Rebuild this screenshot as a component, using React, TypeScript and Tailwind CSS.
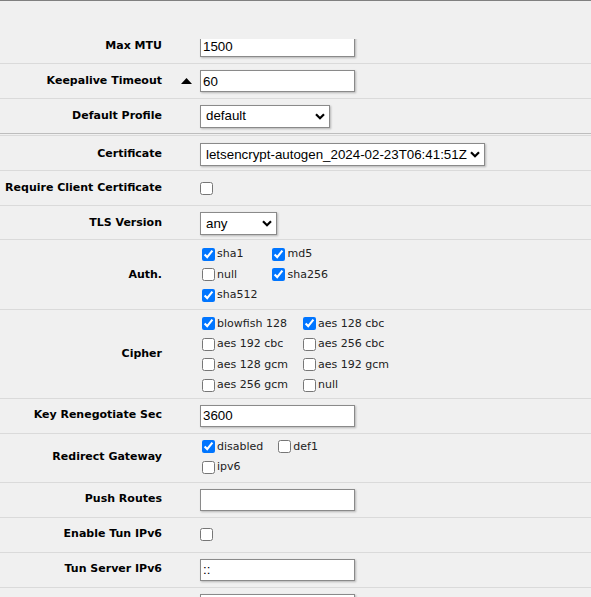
import React from "react";

const Tri = () => (
  <svg width="11" height="6" viewBox="0 0 11 6" className="block">
    <path d="M5.5 0L11 6H0z" fill="#000" />
  </svg>
);

const Chevron = () => (
  <svg width="10" height="7" viewBox="0 0 10 7" className="block">
    <path d="M1 1.2l4 4 4-4" stroke="#000" strokeWidth="2.2" fill="none" />
  </svg>
);

function Row({
  label,
  children,
  tri,
  className = "border-b border-[#dadada]",
  pad = "py-0",
  h = "min-h-[34px]",
}: {
  label: string;
  children?: React.ReactNode;
  tri?: boolean;
  className?: string;
  pad?: string;
  h?: string;
}) {
  return (
    <div className={`flex ${className}`}>
      <div className={`w-[162px] shrink-0 flex items-center justify-end text-right font-bold text-[11px] text-black font-['DejaVu_Sans',sans-serif] whitespace-nowrap ${pad}`}>
        {label}
      </div>
      <div className="w-[36px] shrink-0 flex items-center">
        {tri && (
          <span className="ml-[19px]">
            <Tri />
          </span>
        )}
      </div>
      <div className={`flex-1 flex items-center ${h} ${pad}`}>{children}</div>
    </div>
  );
}

function TextInput({ value }: { value: string }) {
  return (
    <input
      readOnly
      value={value}
      className="ml-[2px] w-[155px] h-[22px] border border-[#8a8a8a] bg-white px-[2px] text-[13.33px] text-black font-['Liberation_Sans',Arial,sans-serif] shadow-[1px_1px_2px_rgba(0,0,0,0.25)] outline-none"
    />
  );
}

function Select({ value, width }: { value: string; width: string }) {
  return (
    <div
      className={`ml-[2px] ${width} h-[23px] border border-[#8a8a8a] bg-white flex items-center justify-between pl-[5px] pr-[4px] text-[13.33px] text-black font-['Liberation_Sans',Arial,sans-serif] shadow-[1px_1px_2px_rgba(0,0,0,0.25)] whitespace-nowrap`}
    >
      <span>{value}</span>
      <Chevron />
    </div>
  );
}

function Check({ checked }: { checked?: boolean }) {
  return (
    <input
      type="checkbox"
      readOnly
      checked={!!checked}
      className="ml-[2px] m-0 w-[13px] h-[13px]"
    />
  );
}

function Group({ items }: { items: [string, boolean][] }) {
  return (
    <div className="grid grid-cols-[auto_auto] justify-start gap-x-[11px] auto-rows-[20.5px]">
      {items.map(([name, on]) => (
        <label
          key={name}
          className="flex items-center text-[11px] text-[#222] font-['DejaVu_Sans',sans-serif] whitespace-nowrap"
        >
          <input
            type="checkbox"
            readOnly
            checked={on}
            className="m-0 ml-[4px] mr-[2px] w-[13px] h-[13px]"
          />
          <span>{name}</span>
        </label>
      ))}
    </div>
  );
}

export default function App() {
  return (
    <div className="w-[591px] h-[597px] bg-[#f0f0f0] flex flex-col overflow-hidden">
      <div className="h-[39px] shrink-0 border-t border-[#808080] bg-[#f0f0f0]" />
      <div className="flex-1 overflow-hidden">
        <div className="mt-[-10px]">
          <Row label="Max MTU">
            <TextInput value="1500" />
          </Row>
          <Row label="Keepalive Timeout" tri>
            <TextInput value="60" />
          </Row>
          <Row label="Default Profile" className="border-b border-[#bdbdbd]">
            <Select value="default" width="w-[130px]" />
          </Row>
          <div className="h-[1px]" />
          <div className="h-[1px] bg-[#dadada]" />
          <div className="h-[1px]" />
          <Row label="Certificate" h="min-h-[33px]" pad="pt-[2px]">
            <Select value="letsencrypt-autogen_2024-02-23T06:41:51Z" width="w-[285px]" />
          </Row>
          <Row label="Require Client Certificate">
            <Check />
          </Row>
          <Row label="TLS Version" h="min-h-[33px]" pad="pt-[2px]">
            <Select value="any" width="w-[77px]" />
          </Row>
          <Row label="Auth." pad="pt-[4px] pb-[3px]">
            <Group
              items={[
                ["sha1", true],
                ["md5", true],
                ["null", false],
                ["sha256", true],
                ["sha512", true],
              ]}
            />
          </Row>
          <Row label="Cipher" pad="pt-[4px] pb-[2px]">
            <Group
              items={[
                ["blowfish 128", true],
                ["aes 128 cbc", true],
                ["aes 192 cbc", false],
                ["aes 256 cbc", false],
                ["aes 128 gcm", false],
                ["aes 192 gcm", false],
                ["aes 256 gcm", false],
                ["null", false],
              ]}
            />
          </Row>
          <Row label="Key Renegotiate Sec">
            <TextInput value="3600" />
          </Row>
          <Row label="Redirect Gateway" pad="pt-[3px] pb-[4px]">
            <Group
              items={[
                ["disabled", true],
                ["def1", false],
                ["ipv6", false],
              ]}
            />
          </Row>
          <Row label="Push Routes">
            <TextInput value="" />
          </Row>
          <Row label="Enable Tun IPv6">
            <Check />
          </Row>
          <Row label="Tun Server IPv6">
            <TextInput value="::" />
          </Row>
          <Row label="">
            <TextInput value="" />
          </Row>
        </div>
      </div>
    </div>
  );
}
